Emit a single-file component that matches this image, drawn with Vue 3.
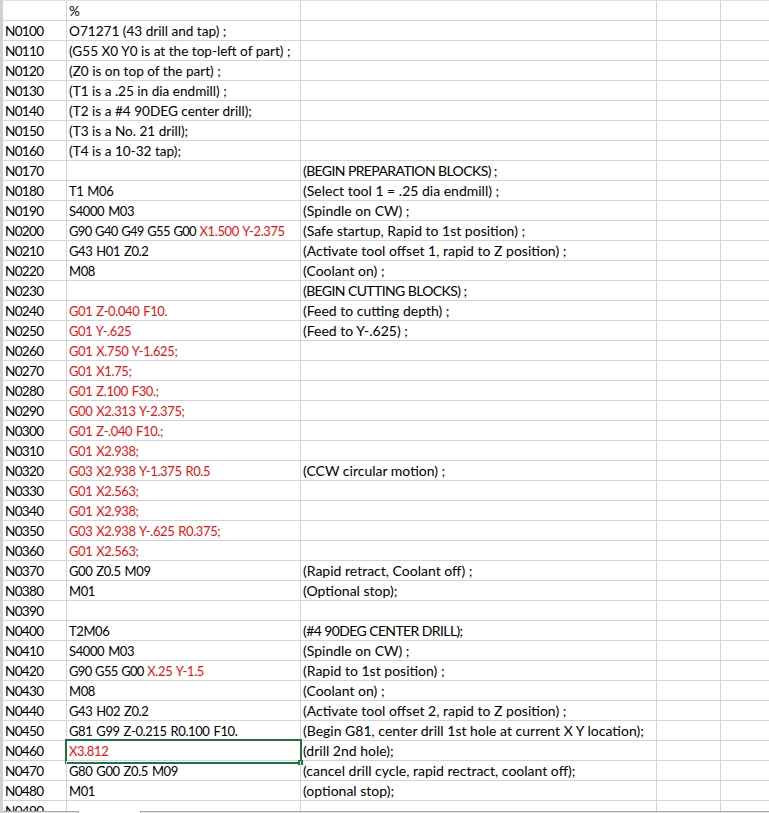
<script setup>
// [line number, code, comment]; code may be split into black + red parts
const rows = [
  ['', [['%', 0]], ''],
  ['N0100', [['O71271 (43 drill and tap) ;', 0]], ''],
  ['N0110', [['(G55 X0 Y0 is at the top-left of part) ;', 0]], ''],
  ['N0120', [['(Z0 is on top of the part) ;', 0]], ''],
  ['N0130', [['(T1 is a .25 in dia endmill) ;', 0]], ''],
  ['N0140', [['(T2 is a #4 90DEG center drill);', 0]], ''],
  ['N0150', [['(T3 is a No. 21 drill);', 0]], ''],
  ['N0160', [['(T4 is a 10-32 tap);', 0]], ''],
  ['N0170', [], '(BEGIN PREPARATION BLOCKS) ;'],
  ['N0180', [['T1 M06', 0]], '(Select tool 1 = .25 dia endmill) ;'],
  ['N0190', [['S4000 M03', 0]], '(Spindle on CW) ;'],
  ['N0200', [['G90 G40 G49 G55 G00 ', 0], ['X1.500 Y-2.375', 1]], '(Safe startup, Rapid to 1st position) ;'],
  ['N0210', [['G43 H01 Z0.2', 0]], '(Activate tool offset 1, rapid to Z position) ;'],
  ['N0220', [['M08', 0]], '(Coolant on) ;'],
  ['N0230', [], '(BEGIN CUTTING BLOCKS) ;'],
  ['N0240', [['G01 Z-0.040 F10.', 1]], '(Feed to cutting depth) ;'],
  ['N0250', [['G01 Y-.625', 1]], '(Feed to Y-.625) ;'],
  ['N0260', [['G01 X.750 Y-1.625;', 1]], ''],
  ['N0270', [['G01 X1.75;', 1]], ''],
  ['N0280', [['G01 Z.100 F30.;', 1]], ''],
  ['N0290', [['G00 X2.313 Y-2.375;', 1]], ''],
  ['N0300', [['G01 Z-.040 F10.;', 1]], ''],
  ['N0310', [['G01 X2.938;', 1]], ''],
  ['N0320', [['G03 X2.938 Y-1.375 R0.5', 1]], '(CCW circular motion) ;'],
  ['N0330', [['G01 X2.563;', 1]], ''],
  ['N0340', [['G01 X2.938;', 1]], ''],
  ['N0350', [['G03 X2.938 Y-.625 R0.375;', 1]], ''],
  ['N0360', [['G01 X2.563;', 1]], ''],
  ['N0370', [['G00 Z0.5 M09', 0]], '(Rapid retract, Coolant off) ;'],
  ['N0380', [['M01', 0]], '(Optional stop);'],
  ['N0390', [], ''],
  ['N0400', [['T2M06', 0]], '(#4 90DEG CENTER DRILL);'],
  ['N0410', [['S4000 M03', 0]], '(Spindle on CW) ;'],
  ['N0420', [['G90 G55 G00 ', 0], ['X.25 Y-1.5', 1]], '(Rapid to 1st position) ;'],
  ['N0430', [['M08', 0]], '(Coolant on) ;'],
  ['N0440', [['G43 H02 Z0.2', 0]], '(Activate tool offset 2, rapid to Z position) ;'],
  ['N0450', [['G81 G99 Z-0.215 R0.100 F10.', 0]], '(Begin G81, center drill 1st hole at current X Y location);'],
  ['N0460', [['X3.812', 1]], '(drill 2nd hole);'],
  ['N0470', [['G80 G00 Z0.5 M09', 0]], '(cancel drill cycle, rapid rectract, coolant off);'],
  ['N0480', [['M01', 0]], '(optional stop);'],
  ['N0490', [], '']
]

// Lato digits and capitals run wider than the sheet's font
const isGcode = (row) => row[1].length > 0 && /^[GXMST]/.test(row[1][0][0])
const isCaps = (text) => text !== '' && text === text.toUpperCase()
</script>

<template>
  <div class="sheet">
    <div v-for="row in rows" :key="row[0]" class="row" :class="{ current: row[0] === 'N0460' }">
      <div class="cell line-no">{{ row[0] }}</div>
      <div class="cell code" :class="{ gcode: isGcode(row) }">
        <span v-for="part in row[1]" :key="part[0]" :class="{ red: part[1] }">{{ part[0] }}</span>
        <div v-if="row[0] === 'N0460'" class="selection"><i class="handle"></i></div>
      </div>
      <div class="cell comment" :class="{ caps: isCaps(row[2]) }">{{ row[2] }}</div>
      <div class="cell"></div>
      <div class="cell"></div>
    </div>
    <div class="footer">
      <div class="bar left"></div>
      <div class="tab"></div>
      <div class="bar"></div>
    </div>
  </div>
</template>

<style scoped>
.sheet {
  position: relative;
  width: 769px;
  height: 813px;
  overflow: hidden;
  background: #fff;
  border-left: 3px solid #d0d0d0;
  border-top: 1px solid #e0e0e0;
  box-sizing: border-box;
  font-family: Lato, sans-serif;
  font-size: 13.6px;
  color: #000;
}

.row {
  position: relative;
  display: grid;
  grid-template-columns: 64px 234px 356px 64px 49px;
  height: 20px;
  box-sizing: border-box;
  border-bottom: 1px solid #d4d4d4;
}

.current::before {
  content: "";
  position: absolute;
  left: -3px;
  top: 0;
  bottom: -1px;
  width: 2px;
  background: #217346;
}

.cell {
  position: relative;
  box-sizing: border-box;
  padding-left: 2px;
  border-right: 1px solid #d4d4d4;
  line-height: 21px;
  white-space: nowrap;
}

.cell:last-child {
  border-right: none;
}

.line-no {
  letter-spacing: -0.7px;
}

.gcode {
  font-size: 13px;
  letter-spacing: -0.4px;
  word-spacing: 1px;
}

/* black part in front of red coordinates */
.gcode span:first-child:not(:last-of-type) {
  letter-spacing: -0.7px;
}

.comment {
  font-size: 14px;
  line-height: 20px;
}

.caps {
  letter-spacing: -0.6px;
}

.red {
  color: #f01010;
}

.selection {
  position: absolute;
  left: -2px;
  top: -2px;
  right: -2px;
  bottom: -2px;
  border: 2px solid #217346;
}

.handle {
  position: absolute;
  right: -3px;
  bottom: -3px;
  width: 5px;
  height: 5px;
  background: #217346;
}

.footer {
  position: absolute;
  left: -3px;
  right: 0;
  bottom: 0;
  height: 2px;
  display: flex;
}

.bar {
  flex: 1;
  border-top: 1px solid #a6a6a6;
  background: #e6e6e6;
}

.bar.left {
  flex: 0 0 78px;
}

.tab {
  flex: 0 0 63px;
  box-sizing: border-box;
  background: #fff;
  border-left: 1px solid #a6a6a6;
  border-right: 1px solid #a6a6a6;
}
</style>

<style>
body {
  margin: 0;
  background: #fff;
}
</style>
